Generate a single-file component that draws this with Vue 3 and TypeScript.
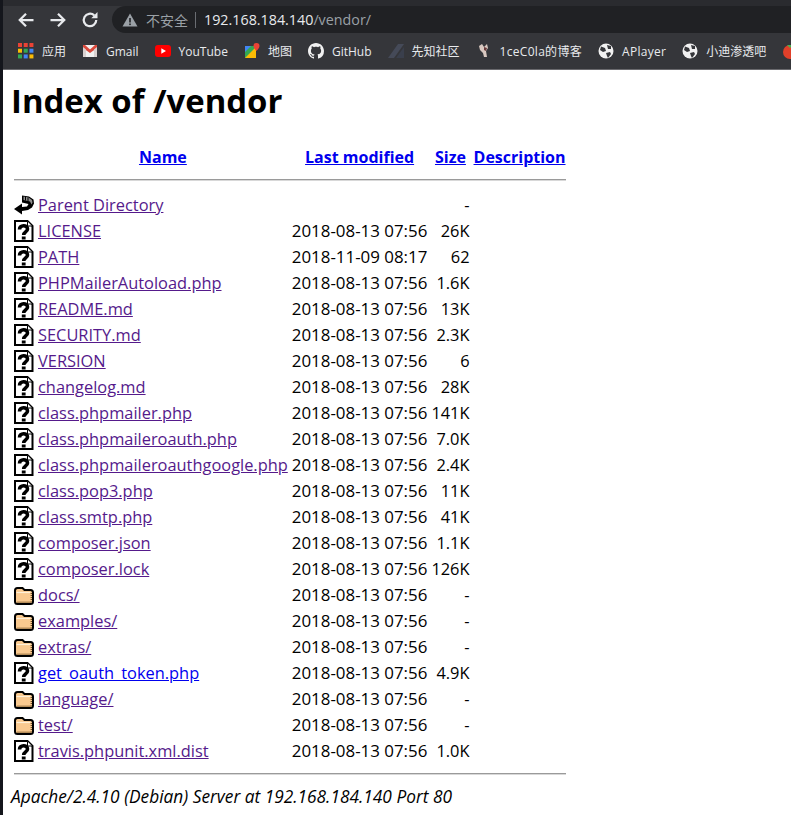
<script setup lang="ts">
interface Row {
  name: string
  date: string
  size: string
  icon: 'file' | 'dir'
  visited: boolean
}
const row = (name: string, date: string, size: string, visited = true): Row => ({
  name,
  date,
  size,
  visited,
  icon: name.endsWith('/') ? 'dir' : 'file',
})
const rows: Row[] = [
  row('LICENSE', '2018-08-13 07:56', '26K'),
  row('PATH', '2018-11-09 08:17', '62'),
  row('PHPMailerAutoload.php', '2018-08-13 07:56', '1.6K'),
  row('README.md', '2018-08-13 07:56', '13K'),
  row('SECURITY.md', '2018-08-13 07:56', '2.3K'),
  row('VERSION', '2018-08-13 07:56', '6'),
  row('changelog.md', '2018-08-13 07:56', '28K'),
  row('class.phpmailer.php', '2018-08-13 07:56', '141K'),
  row('class.phpmaileroauth.php', '2018-08-13 07:56', '7.0K'),
  row('class.phpmaileroauthgoogle.php', '2018-08-13 07:56', '2.4K'),
  row('class.pop3.php', '2018-08-13 07:56', '11K'),
  row('class.smtp.php', '2018-08-13 07:56', '41K'),
  row('composer.json', '2018-08-13 07:56', '1.1K'),
  row('composer.lock', '2018-08-13 07:56', '126K'),
  row('docs/', '2018-08-13 07:56', '-'),
  row('examples/', '2018-08-13 07:56', '-'),
  row('extras/', '2018-08-13 07:56', '-'),
  row('get_oauth_token.php', '2018-08-13 07:56', '4.9K', false),
  row('language/', '2018-08-13 07:56', '-'),
  row('test/', '2018-08-13 07:56', '-'),
  row('travis.phpunit.xml.dist', '2018-08-13 07:56', '1.0K'),
]
const bookmarks = ['应用', 'Gmail', 'YouTube', '地图', 'GitHub', '先知社区', '1ceC0la的博客', 'APlayer', '小迪渗透吧']
</script>

<template>
  <div class="shot">
    <header class="chrome">
      <div class="toolbar">
        <svg class="nav" viewBox="0 0 16 16"><path d="M14 8H3M8 3 3 8l5 5" /></svg>
        <svg class="nav" viewBox="0 0 16 16"><path d="M2 8h11M8 3l5 5-5 5" /></svg>
        <svg class="nav" viewBox="0 0 16 16"><path d="M13 8a5 5 0 1 1-1.600-3.700" /><path class="solid" d="M14 1.500v5h-5z" /></svg>
        <div class="omnibox">
          <svg class="warn" viewBox="0 0 16 16"><path d="M8 1.500 15.500 14.500H.5z" /><rect x="7.200" y="6" width="1.600" height="4.500" /><rect x="7.200" y="11.500" width="1.600" height="1.600" /></svg>
          <span class="insecure">不安全</span>
          <span class="sep"></span>
          <span class="url">192.168.184.140<span class="path">/vendor/</span></span>
        </div>
      </div>
      <nav class="bookmarks">
        <span v-for="(b, i) in bookmarks" :key="b" class="bm" :class="{ wide: i === 6 || i === 7 }">
          <svg v-if="i === 0" viewBox="0 0 14 14">
            <rect x="0" y="0" width="3.500" height="3.500" fill="#ea4335" /><rect x="5" y="0" width="3.500" height="3.500" fill="#ea4335" /><rect x="10" y="0" width="3.500" height="3.500" fill="#ea4335" />
            <rect x="0" y="5" width="3.500" height="3.500" fill="#fbbc05" /><rect x="5" y="5" width="3.500" height="3.500" fill="#34a853" /><rect x="10" y="5" width="3.500" height="3.500" fill="#4285f4" />
            <rect x="0" y="10" width="3.500" height="3.500" fill="#34a853" /><rect x="5" y="10" width="3.500" height="3.500" fill="#4285f4" /><rect x="10" y="10" width="3.500" height="3.500" fill="#fbbc05" />
          </svg>
          <svg v-else-if="i === 1" viewBox="0 0 16 14">
            <rect x="1" y="1" width="14" height="12" fill="#f1f1f1" /><path d="M1 1h2l5 4.500L13 1h2v3L8 9 1 4z" fill="#d9483b" /><path d="M1 3l3 2.500V13H1zM15 3l-3 2.500V13h3z" fill="#d9d0cf" />
          </svg>
          <svg v-else-if="i === 2" viewBox="0 0 16 12">
            <rect width="16" height="12" rx="3" fill="#f00" /><path d="M6.300 3.300 11 6l-4.700 2.700z" fill="#fff" />
          </svg>
          <svg v-else-if="i === 3" viewBox="0 0 16 16">
            <path d="M1 3h11v12H1z" fill="#34a853" /><path d="M1 15 12 4v11z" fill="#fbbc05" /><path d="M1 3h6L1 9z" fill="#4285f4" /><path d="M12.500 0a3 3 0 0 1 3 3c0 2-3 5-3 5s-3-3-3-5a3 3 0 0 1 3-3z" fill="#ea4335" />
          </svg>
          <svg v-else-if="i === 4" viewBox="0 0 16 16">
            <path fill="#f1f1f1" fill-rule="evenodd" d="M8 0C3.580 0 0 3.580 0 8c0 3.540 2.290 6.530 5.470 7.590.4.070.55-.17.550-.38 0-.19-.01-.82-.01-1.490-2.010.37-2.530-.49-2.690-.94-.09-.23-.48-.94-.82-1.130-.28-.15-.68-.52-.01-.53.630-.01 1.080.58 1.230.82.720 1.210 1.870.87 2.330.66.070-.52.280-.87.510-1.070-1.780-.2-3.640-.89-3.640-3.950 0-.87.310-1.590.820-2.150-.08-.2-.36-1.020.08-2.120 0 0 .67-.21 2.200.82.640-.18 1.320-.27 2-.27s1.360.09 2 .27c1.530-1.040 2.200-.82 2.200-.82.440 1.100.16 1.920.08 2.120.51.560.82 1.270.82 2.150 0 3.070-1.870 3.750-3.650 3.950.29.250.54.730.54 1.480 0 1.070-.01 1.930-.01 2.200 0 .21.150.46.550.38A8.010 8.010 0 0 0 16 8c0-4.420-3.580-8-8-8z" />
          </svg>
          <svg v-else-if="i === 5" viewBox="0 0 16 14">
            <path d="M0 14 10 0h6L6 14z" fill="#454a58" /><path d="M8 14 16 3v11z" fill="#3a3f4c" />
          </svg>
          <svg v-else-if="i === 6" viewBox="0 0 14 16">
            <path d="M5 1l2 3 3-3 1 4-2 3 1 6H7L6 10 3 7 2 3z" fill="#d8c8c0" /><path d="M7 4l3 1-1 3-2-1z" fill="#6a3b3b" />
          </svg>
          <svg v-else viewBox="0 0 16 16">
            <circle cx="8" cy="8" r="7.500" fill="#f1f1f1" /><path d="M3 3.500 7 5l1 3-3 1-3-2zM9 2l4 1v3l-3 0zM8 10l4-1 1 2-3 4-1-2z" fill="#35363a" />
          </svg>
          {{ b }}
        </span>
        <svg class="tomato" viewBox="0 0 16 16"><circle cx="8" cy="9" r="7" fill="#e0402a" /><path d="M5 2h6l-3 3z" fill="#4caf50" /></svg>
      </nav>
    </header>

    <main class="page">
      <h1>Index of /vendor</h1>
      <table>
        <thead>
          <tr>
            <th class="ico"></th>
            <th><a href="#">Name</a></th>
            <th><a href="#">Last modified</a></th>
            <th><a href="#">Size</a></th>
            <th><a href="#">Description</a></th>
          </tr>
          <tr><th colspan="5" class="rule"><hr /></th></tr>
        </thead>
        <tbody>
          <tr>
            <td class="ico">
              <svg width="20" height="22" viewBox="0 0 20 22">
                <path d="M8 1.500 15 2.500l4.500 3 .5 4-2 4-4 2.500-6 1v3.500L0 15l8-5.500V13l5-.5 1.500-2.500-6.500-1.500z" fill="#000" />
                <path d="M9.500 2.500 14.500 3.500l3.500 2.500.5 2.500-1 2-1.500-3-6.500-1.500z" fill="#8e8e8e" />
                <path d="M11.500 2.500v4M14 3.500v4" stroke="#000" stroke-width="1" />
              </svg>
            </td>
            <td><a class="seen" href="#">Parent Directory</a></td>
            <td></td>
            <td class="size">-</td>
            <td></td>
          </tr>
          <tr v-for="r in rows" :key="r.name">
            <td class="ico">
              <svg v-if="r.icon === 'file'" width="20" height="22" viewBox="0 0 20 22">
                <path d="M1 1h12.500L18.500 6v15H1z" fill="#fff" stroke="#000" stroke-width="2" />
                <path d="M13.500 1.500V6h4.500" fill="#fff" stroke="#000" stroke-width="1" />
                <path d="M5.500 9.500C5.500 4.500 13.500 4.500 13.500 9c0 3-3.800 2.800-3.800 6" fill="none" stroke="#000" stroke-width="3.600" />
                <rect x="7.800" y="16.500" width="3.800" height="3" fill="#000" />
              </svg>
              <svg v-else width="20" height="22" viewBox="0 0 20 22">
                <path d="M1 6.500C1 5 2 4 3.500 4h5L10.500 6h6C18 6 19 7 19 8.500v9c0 1.500-1 2.500-2.500 2.500h-13C2 20 1 19 1 17.500z" fill="#f9c98f" stroke="#000" stroke-width="2" />
                <path d="M2.500 8.500h14" stroke="#fff0d8" stroke-width="1.200" />
                <path d="M3.500 18.300h13M17.300 9v8.500" stroke="#6e4e22" stroke-width="1.400" stroke-dasharray="1 1" />
              </svg>
            </td>
            <td><a :class="{ seen: r.visited }" href="#">{{ r.name }}</a></td>
            <td class="date">{{ r.date }}</td>
            <td class="size">{{ r.size }}</td>
            <td></td>
          </tr>
          <tr><th colspan="5" class="rule bottom"><hr /></th></tr>
        </tbody>
      </table>
      <address>Apache/2.4.10 (Debian) Server at 192.168.184.140 Port 80</address>
    </main>
  </div>
</template>

<style>
html,
body {
  margin: 0;
  background: #fff;
  overflow: hidden;
}
</style>

<style scoped>
.shot {
  width: 791px;
  height: 815px;
  box-sizing: border-box;
  overflow: hidden;
  border-left: 3px solid #14161c;
  font-family: "Open Sans", "Noto Sans CJK SC", sans-serif;
}
.chrome {
  height: 70px;
  background: #35363a;
  border-top: 6px solid #2a2b2f;
  box-sizing: border-box;
  border-bottom: 1px solid #6a6a6e;
}
.toolbar {
  height: 27px;
  display: flex;
  align-items: center;
  padding: 0 0 0 13px;
  gap: 12px;
}
.nav {
  width: 20px;
  height: 20px;
  flex: none;
  fill: none;
  stroke: #e8eaed;
  stroke-width: 1.800;
}
.nav .solid {
  fill: #e8eaed;
  stroke: none;
}
.omnibox {
  flex: 1;
  height: 27px;
  background: #202124;
  border-radius: 14px 0 0 14px;
  display: flex;
  align-items: center;
  padding-left: 10px;
  font-size: 14.300px;
}
.warn {
  width: 16px;
  height: 16px;
  fill: #9aa0a6;
}
.warn rect {
  fill: #202124;
}
.insecure {
  margin-left: 8px;
  color: #9aa0a6;
  font-size: 14px;
}
.sep {
  width: 1px;
  height: 16px;
  background: #6a6d72;
  margin: 0 8px 0 7px;
}
.url {
  color: #e8eaed;
}
.path {
  color: #9aa0a6;
}
.bookmarks {
  height: 36px;
  display: flex;
  align-items: center;
  gap: 16px;
  padding-left: 15px;
  color: #e8eaed;
  font-size: 12px;
  white-space: nowrap;
}
.bm {
  display: flex;
  align-items: center;
  gap: 8px;
}
.bm.wide {
  letter-spacing: 0.300px;
}
.bm svg {
  width: 16px;
  height: 16px;
  flex: none;
}
.tomato {
  width: 16px;
  height: 16px;
  flex: none;
}
.page {
  padding: 0 0 0 8px;
  color: #000;
  font-size: 16.400px;
}
h1 {
  font-size: 32.900px;
  line-height: 40px;
  margin: 11px 0 0;
  font-weight: 700;
}
table {
  border-spacing: 2px;
  margin-top: 22px;
}
th {
  font-weight: 700;
  font-size: 16px;
  line-height: 22px;
  text-align: center;
  padding: 1px;
}
td {
  padding: 1px;
  line-height: 22px;
  white-space: nowrap;
}
.ico {
  width: 20px;
}
.ico svg {
  display: block;
}
.date {
  font-size: 16.900px;
}
a {
  color: #0000ee;
}
a.seen {
  color: #551a8b;
}
.size {
  text-align: right;
}
.rule {
  line-height: 0;
  padding: 0 1px;
}
hr {
  margin: 8px 0 10px;
  border: 0;
  border-top: 1px solid #9a9a9a;
  border-bottom: 1px solid #d8d8d8;
}
.bottom hr {
  margin: 8px 0 9px;
}
address {
  font-size: 17.300px;
  font-style: italic;
  line-height: 24px;
  margin-top: -1px;
}
</style>
